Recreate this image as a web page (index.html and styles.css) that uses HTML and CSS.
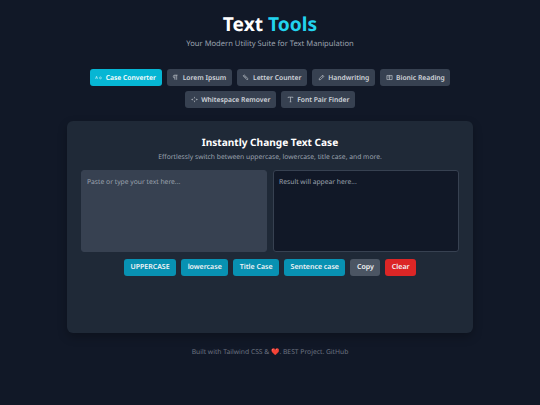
FILE: index.html
```html
<!DOCTYPE html>
<html lang="en">
<head>
    <meta charset="UTF-8">
    <meta name="viewport" content="width=device-width, initial-scale=1.0">
    <title>Text Tools</title>
    <link rel="stylesheet" href="styles.css">
</head>
<body>
    <header class="header">
        <h1>Text <span class="accent">Tools</span></h1>
        <p>Your Modern Utility Suite for Text Manipulation</p>
    </header>

    <nav class="tabs">
        <button class="tab active">
            <svg viewBox="0 0 16 10"><path d="M1 8 3.500 2 6 8M2 6h3M14 4.500c-.5-.6-1-.8-1.700-.8-1.300 0-2.100 1-2.100 2.200s.8 2.200 2.100 2.200c.7 0 1.200-.3 1.700-.8M14 3.700V8"/></svg>
            Case Converter
        </button>
        <button class="tab">
            <svg viewBox="0 0 12 12"><path d="M5 10V2M8 10V2M9.500 2H4.500a2.300 2.300 0 0 0 0 4.600H5"/></svg>
            Lorem Ipsum
        </button>
        <button class="tab">
            <svg viewBox="0 0 12 12"><path d="M2 3.200 3.700 1.500 10.500 8.300 8.800 10 2 3.200ZM4.300 4.500l1-1M6 6.200l1-1"/></svg>
            Letter Counter
        </button>
        <button class="tab">
            <svg viewBox="0 0 12 12"><path d="M2 10 2.500 7.500 8 2 10 4 4.500 9.500 2 10ZM7 3l2 2"/></svg>
            Handwriting
        </button>
        <button class="tab">
            <svg viewBox="0 0 12 12"><path d="M1.500 2.500h9v7h-9zM6 2.500v7M3 4.500h1.500M3 6.500h1.500M7.500 5h1.500"/></svg>
            Bionic Reading
        </button>
        <button class="tab">
            <svg viewBox="0 0 12 12"><path d="M6 1.500v2.500M6 8v2.500M1.500 6h2M8.500 6h2M3 4.500 1.500 6 3 7.500M9 4.500 10.500 6 9 7.500"/></svg>
            Whitespace Remover
        </button>
        <button class="tab">
            <svg viewBox="0 0 12 12"><path d="M2 3.500V2h8v1.500M6 2v8M4.500 10h3"/></svg>
            Font Pair Finder
        </button>
    </nav>

    <main class="card">
        <h2>Instantly Change Text Case</h2>
        <p class="lead">Effortlessly switch between uppercase, lowercase, title case, and more.</p>
        <div class="editors">
            <textarea class="input" placeholder="Paste or type your text here..."></textarea>
            <textarea class="output" placeholder="Result will appear here..." readonly></textarea>
        </div>
        <div class="actions">
            <button class="btn cyan">UPPERCASE</button>
            <button class="btn cyan">lowercase</button>
            <button class="btn cyan">Title Case</button>
            <button class="btn cyan">Sentence case</button>
            <button class="btn gray">Copy</button>
            <button class="btn red">Clear</button>
        </div>
    </main>

    <footer class="footer">Built with Tailwind CSS &amp; <span class="heart">❤️</span>. BEST Project. GitHub</footer>
</body>
</html>
```

FILE: styles.css
```css
* {
    box-sizing: border-box;
}

body {
    margin: 0;
    min-height: 405px;
    padding-top: 11px;
    background-color: #111827;
    color: #e5e7eb;
    font-family: 'Noto Sans', sans-serif;
    text-rendering: geometricPrecision;
    overflow: hidden;
}

.header {
    text-align: center;
}

.header h1 {
    margin: 0;
    font-size: 19.2px;
    line-height: 26px;
    font-weight: 700;
    color: #fff;
}

.accent {
    color: #22d3ee;
}

.header p {
    margin: 1px 0 0;
    font-size: 7.6px;
    line-height: 12px;
    color: #9ca3af;
}

.tabs {
    display: flex;
    flex-wrap: wrap;
    justify-content: center;
    gap: 5px;
    width: 380px;
    margin: 19px auto 0;
}

.tab {
    display: flex;
    align-items: center;
    gap: 3.5px;
    height: 17px;
    padding: 0 5.6px;
    border: none;
    border-radius: 3px;
    background-color: #374151;
    color: #d1d5db;
    font-family: inherit;
    font-size: 6.75px;
    font-weight: 600;
    text-rendering: inherit;
}

.tab svg {
    width: 7px;
    height: 7px;
    fill: none;
    stroke: currentColor;
    stroke-width: 1;
}

.tab.active {
    background-color: #06b6d4;
    color: #fff;
}

.card {
    width: 406px;
    height: 212px;
    margin: 13px auto 0;
    padding: 14px;
    border-radius: 6px;
    background-color: #1f2937;
    box-shadow: 0 4px 10px rgba(0, 0, 0, 0.25);
    text-align: center;
}

.card h2 {
    margin: 0;
    font-size: 10.1px;
    line-height: 14px;
    font-weight: 700;
    color: #fff;
}

.lead {
    margin: 3px 0 0;
    font-size: 6.75px;
    line-height: 10px;
    color: #9ca3af;
}

.editors {
    display: grid;
    grid-template-columns: 1fr 1fr;
    gap: 6px;
    margin-top: 8px;
}

.editors textarea {
    height: 82px;
    padding: 6px 5px;
    border: 1px solid #374151;
    border-radius: 3px;
    color: #e5e7eb;
    font-family: inherit;
    font-size: 6.75px;
    line-height: 10px;
    resize: none;
    text-rendering: inherit;
}

.editors textarea::placeholder {
    color: #9ca3af;
    opacity: 1;
}

.input {
    background-color: #374151;
}

.output {
    background-color: #111827;
}

.actions {
    display: flex;
    justify-content: center;
    gap: 5px;
    margin-top: 7px;
}

.btn {
    height: 17px;
    padding: 0 6.5px;
    border: none;
    border-radius: 3px;
    color: #f3f4f6;
    font-family: inherit;
    font-size: 7px;
    font-weight: 600;
    text-rendering: inherit;
}

.cyan {
    background-color: #0891b2;
}

.gray {
    background-color: #4b5563;
}

.red {
    background-color: #dc2626;
}

.footer {
    margin-top: 14px;
    text-align: center;
    font-size: 6.75px;
    line-height: 10px;
    color: #6b7280;
}

.heart {
    color: #ef4444;
}
```
